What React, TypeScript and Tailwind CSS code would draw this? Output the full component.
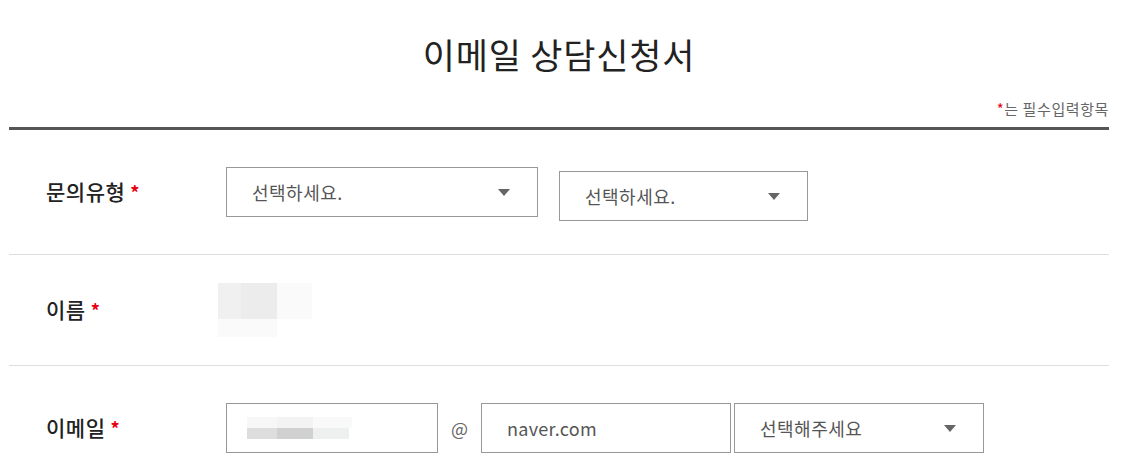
import React from 'react';

const FONT = { fontFamily: '"Noto Sans CJK KR", "Noto Sans", sans-serif' };

const Star = () => <span className="ml-[5px] text-[18px] font-bold text-[#e60012]">*</span>;

const Caret = () => (
  <svg width="12" height="7" viewBox="0 0 12 7" className="shrink-0">
    <path d="M0 0h12L6 7z" fill="#666" />
  </svg>
);

const SelectBox = ({ label, className }: { label: string; className: string }) => (
  <div className={`flex h-[50px] items-center justify-between border border-[#999] bg-white pl-[25px] pr-[27px] ${className}`}>
    <span className="text-[18px] tracking-[0.5px] text-[#555]">{label}</span>
    <Caret />
  </div>
);

const Label = ({ children }: { children: React.ReactNode }) => (
  <div className="flex w-[217px] shrink-0 items-center pl-[37px] text-[21px] font-medium tracking-[0.5px] text-[#222]">
    {children}
    <Star />
  </div>
);

// pixelated blur that hides the personal data
const Blur = ({ cells, className }: { cells: { w: number; c: string }[][]; className: string }) => (
  <div className={`flex flex-col ${className}`}>
    {cells.map((row, i) => (
      <div key={i} className="flex">
        {row.map((cell, j) => (
          <div key={j} className={i === 0 ? 'h-[36px]' : 'h-[18px]'} style={{ width: cell.w, background: cell.c }} />
        ))}
      </div>
    ))}
  </div>
);

export default function App() {
  return (
    <div className="min-h-[471px] bg-white" style={FONT}>
      <div className="ml-[9px] w-[1100px]">
        <div className="border-b-[3px] border-[#555] pb-2 pt-[29px]">
          <h1 className="text-center text-[35px] font-normal leading-[50px] tracking-[0.8px] text-[#222]">이메일 상담신청서</h1>
          <p className="mt-[20px] text-right text-[15px] leading-5 tracking-[0.6px] text-[#666]">
            <span className="text-[#e60012]">*</span>는 필수입력항목
          </p>
        </div>

        <div className="flex h-[125px] items-start border-b border-[#ddd] pt-[37px]">
          <div className="flex h-[50px] items-center">
            <Label>문의유형</Label>
          </div>
          <SelectBox label="선택하세요." className="w-[312px]" />
          <SelectBox label="선택하세요." className="ml-[21px] mt-[4px] w-[249px]" />
        </div>

        <div className="flex h-[111px] items-center border-b border-[#ddd]">
          <Label>이름</Label>
          <Blur
            className="-ml-[8px]"
            cells={[
              [
                { w: 23, c: '#f0f0f0' },
                { w: 36, c: '#ececec' },
                { w: 35, c: '#fafafa' },
              ],
              [{ w: 59, c: '#fafafa' }],
            ]}
          />
        </div>

        <div className="flex items-center pt-[37px]">
          <Label>이메일</Label>
          <div className="flex h-[50px] w-[212px] items-center border border-[#999] pl-[20px]">
            <div className="flex flex-col">
              <div className="flex h-[11px]">
                <div className="w-[30px] bg-[#f7f7f7]" />
                <div className="w-[36px] bg-[#f3f3f3]" />
                <div className="w-[39px] bg-[#f9f9f9]" />
              </div>
              <div className="flex h-[11px]">
                <div className="w-[30px] bg-[#dddddd]" />
                <div className="w-[36px] bg-[#d0d0d0]" />
                <div className="w-[36px] bg-[#eef0f0]" />
              </div>
            </div>
          </div>
          <span className="w-[43px] text-center text-[18px] text-[#666]">@</span>
          <div className="flex h-[50px] w-[250px] items-center border border-[#999] pl-[25px]">
            <span className="text-[18px] tracking-[0.3px] text-[#555]">naver.com</span>
          </div>
          <SelectBox label="선택해주세요" className="ml-[3px] w-[250px] pr-[22px]" />
        </div>
      </div>
    </div>
  );
}
